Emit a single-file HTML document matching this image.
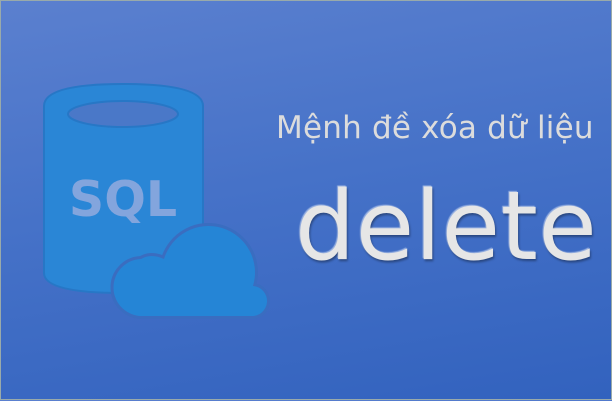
<!DOCTYPE html>
<html><head><meta charset="utf-8"><style>
html,body{margin:0;padding:0}
body{width:612px;height:400px;overflow:hidden;position:relative;background:linear-gradient(170deg,#5b80cf 0%,#4672c8 45%,#3262be 100%);box-sizing:border-box;border:1px solid #9aa;font-family:"DejaVu Sans","Liberation Sans",sans-serif}
.t1{position:absolute;left:275px;top:109px;font-size:31px;color:#dcdcdc;white-space:nowrap;letter-spacing:0.2px}
.t2{position:absolute;left:294px;top:171px;font-size:95px;color:#e6e6e6;white-space:nowrap;letter-spacing:0.5px;text-shadow:1px 2px 2px rgba(0,0,0,0.35),-1px -1px 1px rgba(255,255,255,0.5)}
svg{position:absolute;left:0;top:0}
</style></head><body>
<svg width="612" height="400">
<path d="M43 105 Q43 83 122 83 Q202 83 202 105 L202 272 Q202 292 122 292 Q43 292 43 272 Z" fill="#2a86d6" stroke="#2777c6" stroke-width="2"/>
<ellipse cx="122" cy="113" rx="55" ry="13" fill="#4a78c8" stroke="#2777c6" stroke-width="2"/>
<text x="122" y="215" text-anchor="middle" font-family="DejaVu Sans,sans-serif" font-weight="bold" font-size="49" fill="#83a5dd">SQL</text>
<path d="M142 315 A22 22 0 0 1 140 258 Q150 252 163 258 A45 45 0 0 1 252 285 A15 15 0 0 1 250 315 Z" fill="#2585d6" stroke="#3a6dc0" stroke-width="6" paint-order="stroke"/>
</svg>
<div class="t1">Mệnh đề xóa dữ liệu</div>
<div class="t2">delete</div>
</body></html>
